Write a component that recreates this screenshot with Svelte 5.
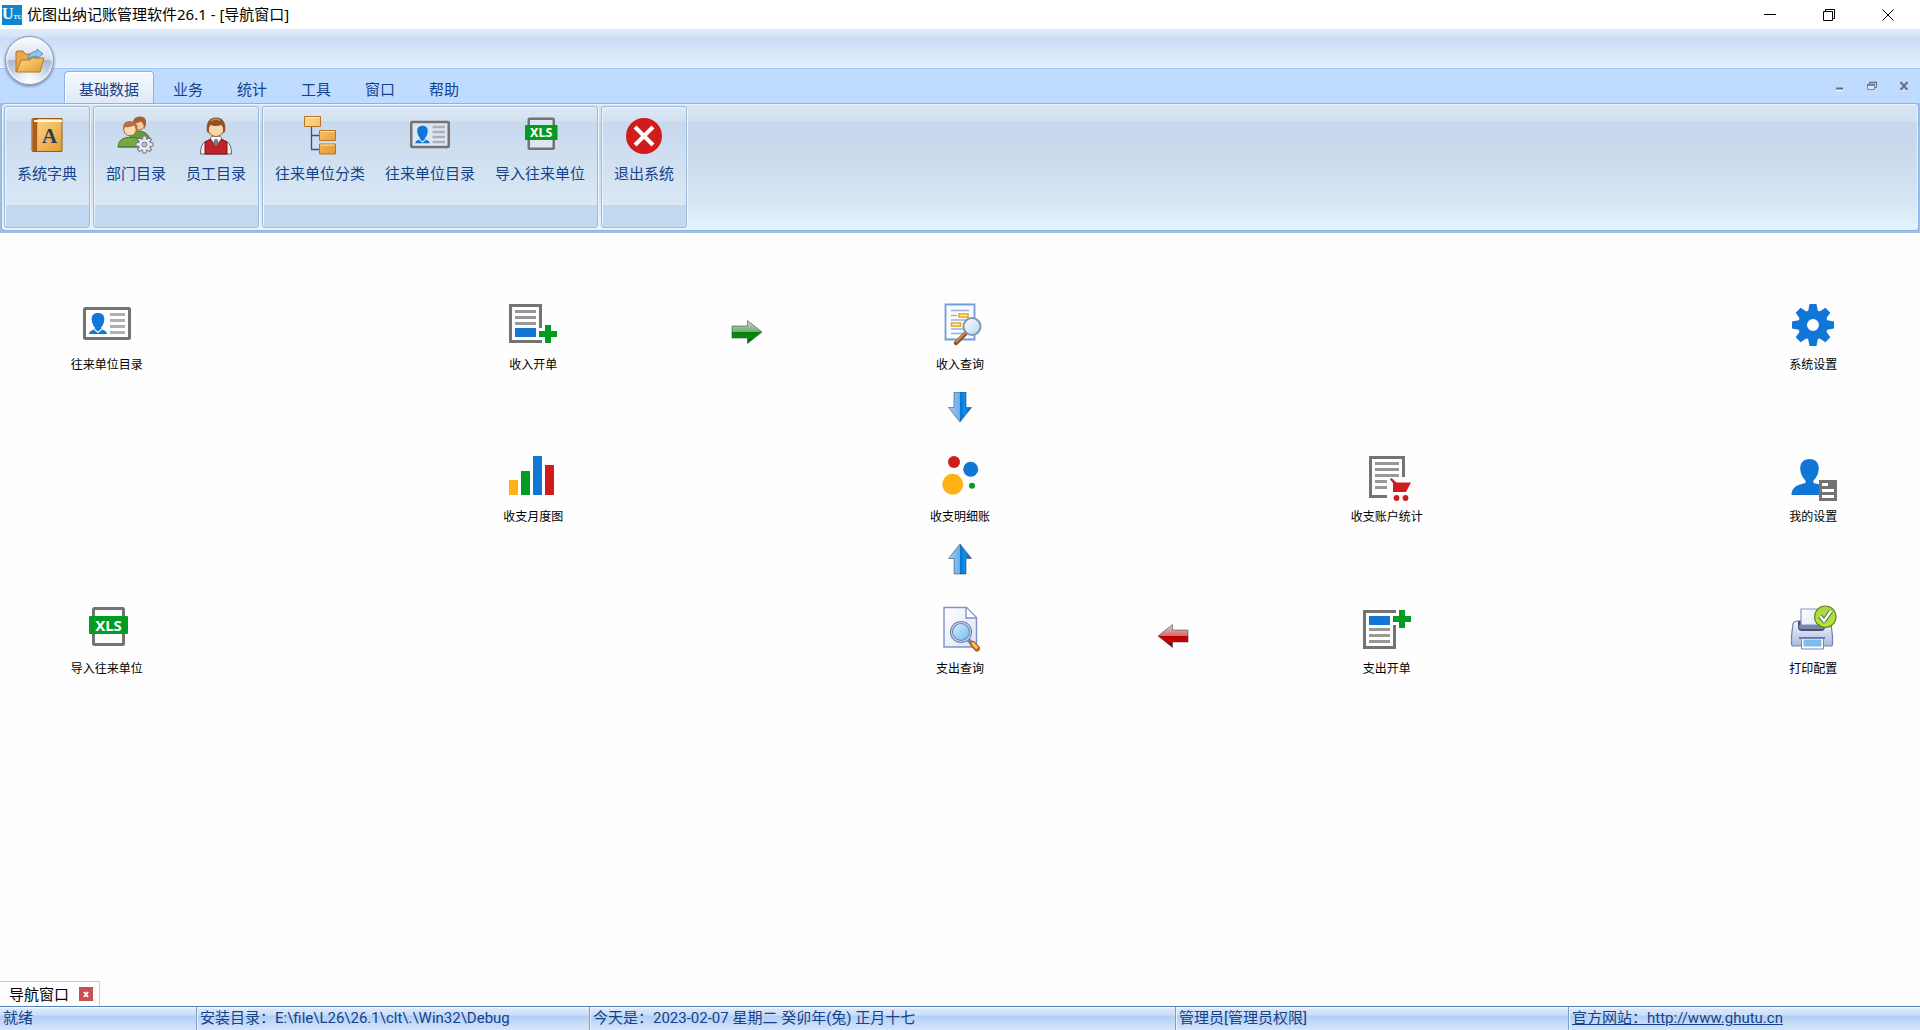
<script>
  const tabs = ['基础数据', '业务', '统计', '工具', '窗口', '帮助'];
  let active = $state('基础数据');

  const groups = [
    [{ icon: 'book', label: '系统字典' }],
    [
      { icon: 'dept', label: '部门目录' },
      { icon: 'staff', label: '员工目录' }
    ],
    [
      { icon: 'tree', label: '往来单位分类' },
      { icon: 'card', label: '往来单位目录' },
      { icon: 'xls', label: '导入往来单位' }
    ],
    [{ icon: 'exit', label: '退出系统' }]
  ];

  // Navigation map: one array per row, nine columns, null is an empty cell.
  const go = (arrow) => ({ arrow });
  const to = (icon, label) => ({ icon, label });
  const map = [
    [to('card', '往来单位目录'), null, to('billIn', '收入开单'), go('right'), to('queryIn', '收入查询'), null, null, null, to('gear', '系统设置')],
    [null, null, null, null, go('down'), null, null, null, null],
    [null, null, to('bars', '收支月度图'), null, to('dots', '收支明细账'), null, to('cart', '收支账户统计'), null, to('user', '我的设置')],
    [null, null, null, null, go('up'), null, null, null, null],
    [to('xls', '导入往来单位'), null, null, null, to('queryOut', '支出查询'), go('left'), to('billOut', '支出开单'), null, to('printer', '打印配置')]
  ];

  const arrows = {
    right: { flip: 'matrix(1 0 0 1 0 0)', paint: 'green' },
    left: { flip: 'matrix(-1 0 0 1 32 0)', paint: 'red' },
    down: { flip: 'matrix(0 1 1 0 0 -1)', paint: 'blue' },
    up: { flip: 'matrix(0 -1 1 0 0 31)', paint: 'blue' }
  };
  const teeth = [0, 45, 90, 135, 180, 225, 270, 315];
</script>

{#snippet art(name)}
  {#if name === 'card'}
    <svg viewBox="0 0 48 48" aria-hidden="true">
      <rect x="1.5" y="8.5" width="45" height="30" rx="1" fill="#fff" fill-opacity=".35" stroke="#737373" stroke-width="3" />
      <path d="M15 13c4.500 0 6.500 2.500 6.300 6.500-.2 4-1.800 6.500-3.600 8.500l2.300 2q3.500 .8 4 4H6q.5-3.200 4-4l2.300-2c-1.800-2-3.400-4.500-3.600-8.500-.2-4 1.800-6.500 6.300-6.500z" fill="#1177d7" />
      <path d="M11 29l4 3.500 4-3.500" fill="none" stroke="#f2f6fb" stroke-width="1.300" />
      <path d="M27 14.500h15M27 20.500h15M27 26.500h15M27 32.500h15" stroke="#aeb0b3" stroke-width="3" />
    </svg>
  {:else if name === 'xls'}
    <svg viewBox="0 0 48 48" aria-hidden="true">
      <rect x="10.500" y="4.500" width="30" height="36" rx="1" fill="#fff" fill-opacity=".3" stroke="#737373" stroke-width="3" />
      <rect x="6" y="12" width="39" height="18" rx="1" fill="#039c23" />
      <text x="25.500" y="26.500" class="xls">XLS</text>
    </svg>
  {:else if name === 'billIn'}
    <svg viewBox="0 0 48 48" aria-hidden="true">
      <path d="M31.500 28V5.500h-30v36H33" fill="none" stroke="#737373" stroke-width="3" />
      <path d="M6 11.500h21M6 17.500h21M6 23.500h21" stroke="#989898" stroke-width="3" />
      <path d="M6 28h21v9H6z" fill="#1177d7" />
      <path d="M36 25h6v6h6v6h-6v6h-6v-6h-6v-6h6z" fill="#039c23" />
    </svg>
  {:else if name === 'billOut'}
    <svg viewBox="0 0 48 48" aria-hidden="true">
      <path d="M33 7.500H1.500v36h30V21" fill="none" stroke="#737373" stroke-width="3" />
      <path d="M6 25.500h21M6 31.500h21M6 37.500h21" stroke="#989898" stroke-width="3" />
      <path d="M6 12h21v9H6z" fill="#1177d7" />
      <path d="M36 6h6v6h6v6h-6v6h-6v-6h-6v-6h6z" fill="#039c23" />
    </svg>
  {:else if name === 'bars'}
    <svg viewBox="0 0 48 48" aria-hidden="true">
      <path d="M0 28h9v15H0z" fill="#ffb115" />
      <path d="M12 19h9v24h-9z" fill="#039c23" />
      <path d="M24 4h9v39h-9z" fill="#1177d7" />
      <path d="M36 13h9v30h-9z" fill="#d11c1c" />
    </svg>
  {:else if name === 'dots'}
    <svg viewBox="0 0 48 48" aria-hidden="true">
      <circle cx="18" cy="10" r="6" fill="#d11c1c" />
      <circle cx="34.700" cy="17.300" r="7.500" fill="#1177d7" />
      <circle cx="16.700" cy="32.300" r="10.500" fill="#ffb115" />
      <circle cx="36" cy="33.700" r="3" fill="#039c23" />
    </svg>
  {:else if name === 'cart'}
    <svg viewBox="0 0 48 48" aria-hidden="true">
      <path d="M40.500 25V5.500h-33v39H24" fill="none" stroke="#737373" stroke-width="3" />
      <path d="M12 11.500h24M12 17.500h24M12 23.500h24M12 29.500h12M12 35.500h12" stroke="#989898" stroke-width="3" />
      <path d="M27 27.500l1.500-1.500 5 4.500H48L43 40H30v-9z" fill="#d11c1c" />
      <circle cx="33.500" cy="46" r="2.900" fill="#d11c1c" />
      <circle cx="42.500" cy="46" r="2.900" fill="#d11c1c" />
    </svg>
  {:else if name === 'gear'}
    <svg viewBox="0 0 48 48" aria-hidden="true">
      <g transform="translate(24 25)" fill="#1177d7">
        {#each teeth as a}
          <path d="M-5-13l1.500-8h7l1.500 8z" transform="rotate({a})" />
        {/each}
      </g>
      <circle cx="24" cy="25" r="10.500" fill="none" stroke="#1177d7" stroke-width="9" />
    </svg>
  {:else if name === 'user'}
    <svg viewBox="0 0 48 48" aria-hidden="true">
      <path d="M20.500 7c6 0 9.500 4 9.300 9.500-.2 5-2 9-5.300 12v2.500c5 1.500 13.500 2 14 12H2.500c0-9.500 8.500-10.500 14-12v-2.500c-3.300-3-5.100-7-5.300-12C11 11 14.500 7 20.500 7z" fill="#1177d7" />
      <path d="M30 28h18v21H30z" fill="#737373" />
      <path d="M33 32.500h6M33 38.500h12M33 44.500h12" stroke="#fff" stroke-width="3" />
    </svg>
  {:else if name === 'queryIn'}
    <svg viewBox="0 0 48 48" aria-hidden="true">
      <path d="M9.500 4.500h29v35h-29z" fill="#fafcff" stroke="#6f9edb" stroke-width="1.800" />
      <path d="M15 10.500h18M15 15.500h6M15 20h18M27 24.500h6M15 29h14M15 33.500h12" stroke="#8fb4e0" stroke-width="1.400" />
      <path d="M23 14h9v3h-9zM15.500 23h9v3h-9z" fill="#fff4c4" stroke="#e9a21c" stroke-width="1.600" />
      <path d="M29.500 33.500L20 43" stroke="#93532a" stroke-width="4.500" stroke-linecap="round" />
      <path d="M29 33L20 42" stroke="#d99b63" stroke-width="1.500" />
      <circle cx="36" cy="26.500" r="8.500" fill="url(#lens)" stroke="#8698ad" stroke-width="2" />
    </svg>
  {:else if name === 'queryOut'}
    <svg viewBox="0 0 48 48" aria-hidden="true">
      <path d="M8 3.500h22.500l10 10v29.500H8z" fill="url(#paper)" stroke="#7f93c8" stroke-width="1.400" />
      <path d="M30 4v10h10" fill="#fff" stroke="#7f93c8" stroke-width="1.400" />
      <path d="M32.500 36l4 4" stroke="#7180ad" stroke-width="4" />
      <path d="M37 40l4 4.500" stroke="#b5651d" stroke-width="6" stroke-linecap="round" />
      <path d="M37 39.500l3.500 4" stroke="#ffc164" stroke-width="2.800" stroke-linecap="round" />
      <circle cx="25" cy="28" r="9.500" fill="url(#lens2)" stroke="#6d80b1" stroke-width="3.200" />
      <circle cx="25" cy="28" r="9.500" fill="none" stroke="#c6d3ec" stroke-width="1.200" />
    </svg>
  {:else if name === 'printer'}
    <svg viewBox="0 0 48 48" aria-hidden="true">
      <path d="M4 20q1-3 5-3h28q4 0 5 3l1.500 12v8q0 2-2 2h-37q-2 0-2-2v-8z" fill="url(#shell)" stroke="#7482b2" stroke-width="1.200" />
      <path d="M9 17h27v6q0 4-4 4H13q-4 0-4-4z" fill="#4a5272" />
      <path d="M12 5h20v16H12z" fill="url(#paper)" stroke="#7f93c8" stroke-width="1.200" />
      <path d="M10 21h25v2q0 2-3 2H13q-3 0-3-2z" fill="#7b86a9" />
      <path d="M10 33h26v2H10z" fill="#6776aa" />
      <path d="M12.500 34.500h22V45h-22z" fill="#fff" stroke="#7482b2" />
      <path d="M14.500 35.500h18v7h-18z" fill="#7dbcec" />
      <circle cx="36.300" cy="12.700" r="10.700" fill="url(#lime)" stroke="#5d8a19" stroke-width="1.200" />
      <path d="M31 12l4 5 7-10" fill="none" stroke="#5c6f4c" stroke-width="4.600" stroke-linejoin="round" />
      <path d="M31 12l4 5 7-10" fill="none" stroke="#fff" stroke-width="2.400" />
    </svg>
  {:else if name === 'book'}
    <svg viewBox="0 0 40 40" aria-hidden="true">
      <path d="M6 3.500h29v33H6q-1 0-1-1v-31q0-1 1-1z" fill="url(#gold)" stroke="#9c5a17" />
      <path d="M5.500 4h5v32.500h-5z" fill="#a95d24" />
      <path d="M7 6h28" stroke="#fff4dc" stroke-width="2" />
      <path d="M10.500 8v28" stroke="#e9ae62" />
      <text x="22.500" y="28" class="letter">A</text>
    </svg>
  {:else if name === 'dept'}
    <svg viewBox="0 0 40 40" aria-hidden="true">
      <path d="M13 24q2-7 9-8 10 0 12 9v3H14z" fill="#6a9a3a" stroke="#4c7727" />
      <circle cx="23" cy="9" r="6" fill="#f3cf9f" stroke="#a4683c" />
      <path d="M17 8q0-7 8-6.500 6 .5 5 8l-2 5q0-6-3-8-3 2-8 1.500z" fill="#a65f33" />
      <path d="M2 32q0-8 9-9.500h7q7 1.500 8 9.500z" fill="#78a843" stroke="#4c7727" />
      <path d="M2.500 31h23v1.500h-23z" fill="#57852b" />
      <circle cx="14" cy="14.500" r="6.300" fill="#f9dcae" stroke="#a4683c" />
      <path d="M7 15q-1-9 7-9 8 0 7.500 8l-1.500 3q0-5-2-6.500-4 2.500-9 1.500z" fill="#b97043" />
      <g transform="translate(28.500 29.500)" fill="#eceff4" stroke="#6f7480" stroke-width="1">
        {#each teeth as a}
          <path d="M-2-5l.5-3.500h3l.5 3.500z" transform="rotate({a})" />
        {/each}
        <circle r="5.500" stroke="none" />
        <circle r="2.500" fill="#b8c2d2" />
      </g>
    </svg>
  {:else if name === 'staff'}
    <svg viewBox="0 0 40 40" aria-hidden="true">
      <path d="M4.500 39q0-9 4-12l7-3h9l7 3q4 3 4 12z" fill="#f4f4f6" stroke="#6a5e62" />
      <path d="M9 39V27l6-3 5 7 5-7 6 3v12z" fill="#c02228" stroke="#7c1417" />
      <path d="M14 23l6 8 6-8-3-2h-6z" fill="#fff" stroke="#55585e" stroke-width=".8" />
      <path d="M18.500 24h3l1 4-2.500 3-2.500-3z" fill="#777d88" />
      <circle cx="20" cy="13.500" r="8" fill="#f8d8aa" stroke="#8f5a30" />
      <path d="M11 17q-2-14 9-14.500Q31 3 29 17l-2 1q1-5-1.500-8-6 2-11 0-2.500 3-1.500 8z" fill="#8e5227" />
      <path d="M15 6q4-3 9-.5" stroke="#c88b54" fill="none" stroke-width="1.500" />
    </svg>
  {:else if name === 'tree'}
    <svg viewBox="0 0 40 40" aria-hidden="true">
      <path d="M11.500 11v23.500H20M11.500 20.500H20" fill="none" stroke="#3d4f75" stroke-width="1.300" />
      <path d="M4.500 1.500h16v10h-16zM19.500 15.500h16v10h-16zM19.500 29h16v10h-16z" fill="url(#gold)" stroke="#b77327" />
      <path d="M5.500 2.500h14M20.500 16.500h14M20.500 30h14" stroke="#ffe9b9" />
    </svg>
  {:else if name === 'exit'}
    <svg viewBox="0 0 40 40" aria-hidden="true">
      <circle cx="20" cy="21" r="18" fill="#d11c1c" />
      <path d="M11 12l18 18M29 12L11 30" stroke="#fff" stroke-width="4" />
    </svg>
  {/if}
{/snippet}

<svg class="defs" width="0" height="0" aria-hidden="true">
  <defs>
    <linearGradient id="gold" x2="1" y2="1"><stop offset="0" stop-color="#ffd98c" /><stop offset="1" stop-color="#e29b33" /></linearGradient>
    <linearGradient id="paper" x2="1" y2="1"><stop offset="0" stop-color="#fff" /><stop offset="1" stop-color="#dbe3f6" /></linearGradient>
    <linearGradient id="shell" x2="0" y2="1"><stop offset="0" stop-color="#f6f8ff" /><stop offset="1" stop-color="#aab8dc" /></linearGradient>
    <linearGradient id="lime" x2="0" y2="1"><stop offset="0" stop-color="#a8d34a" /><stop offset="1" stop-color="#b9ea2e" /></linearGradient>
    <linearGradient id="lens" x2="1" y2="1"><stop offset="0" stop-color="#fff" /><stop offset="1" stop-color="#b4d4f6" /></linearGradient>
    <linearGradient id="lens2" x2="1" y2="1"><stop offset="0" stop-color="#d8f3ff" /><stop offset="1" stop-color="#6bb8ec" /></linearGradient>
    <linearGradient id="green" x2="0" y2="1"><stop offset="0" stop-color="#c9dfc9" /><stop offset=".5" stop-color="#6fae6f" /><stop offset=".5" stop-color="#0a7c0a" /><stop offset=".7" stop-color="#079007" /><stop offset="1" stop-color="#045204" /></linearGradient>
    <linearGradient id="red" x2="0" y2="1"><stop offset="0" stop-color="#ecc9c9" /><stop offset=".5" stop-color="#cf6a6a" /><stop offset=".5" stop-color="#b80000" /><stop offset=".7" stop-color="#c90000" /><stop offset="1" stop-color="#6e0000" /></linearGradient>
    <linearGradient id="blue" x2="0" y2="1"><stop offset="0" stop-color="#a9d0f5" /><stop offset=".5" stop-color="#66aeea" /><stop offset=".5" stop-color="#0672cf" /><stop offset=".7" stop-color="#1090ec" /><stop offset="1" stop-color="#0563bd" /></linearGradient>
  </defs>
</svg>

<div class="app">
  <header class="title">
    <span class="logo">U<small>TU</small></span>
    <h1>优图出纳记账管理软件26.1 - [导航窗口]</h1>
    <div class="win">
      <button aria-label="最小化"><svg viewBox="0 0 12 12"><path d="M0 5.500h12" /></svg></button>
      <button aria-label="还原"><svg viewBox="0 0 12 12"><path d="M.5 2.500h9v9h-9zM2.500 2.500v-2h9v9h-2" /></svg></button>
      <button aria-label="关闭"><svg viewBox="0 0 12 12"><path d="M.5.5l11 11M11.500.5l-11 11" /></svg></button>
    </div>
  </header>

  <div class="caption">
    <button class="orb" aria-label="打开">
      <svg viewBox="0 0 30 26" aria-hidden="true">
        <path d="M1 24V4l1-1h6l2 3h13v5" fill="#e8a850" stroke="#b97420" />
        <path d="M1.500 24L6 12h9l2-2h12l-4 14z" fill="url(#gold)" stroke="#b97420" />
        <path d="M13 11q1-8 9-7.500V1l6 5-6 4.500V8q-5 0-9 3z" fill="#8cc6ee" stroke="#4187bb" stroke-width=".8" />
      </svg>
    </button>
  </div>

  <nav class="tabs">
    {#each tabs as tab}
      <button class="tab" class:on={tab === active} onclick={() => (active = tab)}>{tab}</button>
    {/each}
    <div class="mdi">
      <button aria-label="最小化子窗口"><svg viewBox="0 0 10 10"><path d="M1 7.500h7" stroke="#667084" stroke-width="2" /><path d="M1 9.500h7" stroke="#fff" /></svg></button>
      <button aria-label="还原子窗口"><svg viewBox="0 0 10 10"><path d="M2.500 3V1.500h7v5H8" stroke="#667084" fill="none" /><path d="M.5 3.500h7v5h-7z" stroke="#7b88a3" fill="#dbe8fa" /><path d="M0 4h8M2 1.500h8" stroke="#667084" stroke-width="1.500" /></svg></button>
      <button aria-label="关闭子窗口"><svg viewBox="0 0 10 10"><path d="M1 9.500h3M6 9.500h3" stroke="#fff" /><path d="M1.500 1l7 8M8.500 1l-7 8" stroke="#667084" stroke-width="2" /></svg></button>
    </div>
  </nav>

  <div class="ribbon">
    <div class="panel">
      {#each groups as group}
        <section class="group">
          {#each group as item}
            <button class="tool">{@render art(item.icon)}<span>{item.label}</span></button>
          {/each}
        </section>
      {/each}
    </div>
  </div>

  <main>
    {#each map.flat() as cell}
      {#if cell?.arrow}
        <div class="arrow">
          <svg viewBox="0 0 32 32" aria-hidden="true">
            <g transform={arrows[cell.arrow].flip}>
              <path d="M1 10h15.500V4.500L31 16 16.500 27.500V22H1z" fill="url(#{arrows[cell.arrow].paint})" stroke="#31404e" stroke-opacity=".55" />
            </g>
          </svg>
        </div>
      {:else if cell}
        <button class="node">{@render art(cell.icon)}<span>{cell.label}</span></button>
      {:else}
        <i></i>
      {/if}
    {/each}
  </main>

  <div class="docs">
    <div class="doc">
      <span>导航窗口</span>
      <button aria-label="关闭导航窗口"><svg viewBox="0 0 14 14"><path d="M5 5l4 5M9 5l-4 5" /></svg></button>
    </div>
  </div>

  <footer>
    <span>就绪</span>
    <span>安装目录：E:\file\L26\26.1\clt\.\Win32\Debug</span>
    <span>今天是：2023-02-07 星期二 癸卯年(兔) 正月十七</span>
    <span>管理员[管理员权限]</span>
    <span><a href="http://www.ghutu.cn">官方网站：http://www.ghutu.cn</a></span>
  </footer>
</div>

<style>
  :global(body) { margin: 0; background: #fefefe; }
  .app {
    min-height: 100vh;
    display: flex;
    flex-direction: column;
    font: 15px/20px "Noto Sans", "Noto Sans CJK SC", sans-serif;
    color: #15428b;
  }
  .defs { position: absolute; }
  svg { display: block; }
  button { font: inherit; color: inherit; border: 0; padding: 0; margin: 0; background: none; }

  .title { height: 29px; display: flex; align-items: center; gap: 5px; padding: 0 3px 0 2px; background: #fff; color: #000; }
  .title h1 { font: inherit; margin: 0; padding-bottom: 2px; flex: 1; }
  .logo { width: 20px; height: 20px; background: #0c86cf; color: #fff; font: bold 16px/17px "Liberation Serif", serif; white-space: nowrap; overflow: hidden; }
  .logo small { font-size: 6px; }
  .win { display: flex; }
  .win button { width: 59px; height: 28px; display: grid; place-items: center; }
  .win svg { width: 12px; height: 12px; fill: none; stroke: #000; }

  .caption {
    height: 39px;
    position: relative;
    border-bottom: 1px solid #9cc6f8;
    box-shadow: inset 0 -1px #e9f2fd;
    background: linear-gradient(#dfebfb 0, #d5e4f7 8px, #cadcf6 8px, #e4effd 100%);
  }
  .orb {
    position: absolute;
    left: 5px;
    top: 7px;
    z-index: 1;
    width: 49px;
    height: 49px;
    border-radius: 50%;
    display: grid;
    place-items: center;
    border: 1px solid #8798b3;
    background: radial-gradient(ellipse at 50% 100%, #fff 0, #ffffff00 55%), linear-gradient(#fbfcfe 0, #d5dfec 48%, #a9bbd3 50%, #dfe8f3 100%);
    box-shadow: 0 1px 3px #5f7699, inset 0 0 2px 1px #fff;
  }
  .orb svg { width: 30px; height: 26px; }

  .tabs { height: 34px; display: flex; align-items: flex-end; gap: 4px; padding-left: 64px; background: #bfdbff; }
  .tab { height: 32px; padding: 4px 15px 0; }
  .tab.on {
    border-radius: 4px 4px 0 0;
    background: linear-gradient(#f5f9fe, #e0eaf7);
    box-shadow: inset 1px 1px #8db2e3, inset -1px 0 #8db2e3, inset 2px 2px #fff;
  }
  .mdi { margin: 0 6px 7px auto; display: flex; gap: 12px; }
  .mdi button { width: 20px; height: 20px; display: grid; place-items: center; }
  .mdi svg { width: 10px; height: 10px; }

  .ribbon { background: #a3bfe4; padding: 0 1px 2px; }
  .panel {
    display: flex;
    gap: 3px;
    padding: 2px;
    border: 1px solid #8db2e3;
    border-radius: 4px;
    background: linear-gradient(#dbe6f4 0, #d1dfef 17px, #c7d8ed 18px, #c8d9ec 45px, #d5e5f3 95px, #e3f4ff 100%);
    box-shadow: inset 0 0 0 1px #e8f3fd;
  }
  .group {
    display: flex;
    padding: 8px 2px 44px;
    border: 1px solid #9dbbd9;
    border-radius: 3px;
    background: linear-gradient(#dfe9f5 0, #d2e0f0 14px, #c8d9ee 15px, #dae8f5 98px, #c1d8f0 98px);
    box-shadow: inset 1px 1px #edf4fb, 1px 1px #edf6fd;
  }
  .tool { padding: 0 10px; display: flex; flex-direction: column; align-items: center; gap: 8px; }
  .tool svg { width: 40px; height: 40px; }

  main {
    flex: 1;
    display: grid;
    grid-template-columns: repeat(9, 1fr);
    grid-auto-rows: 76px;
    align-content: start;
    padding-top: 67px;
    background: #fefefe;
  }
  .node { height: 74px; justify-self: center; display: flex; flex-direction: column; align-items: center; gap: 8px; color: #000; font-size: 12px; line-height: 18px; }
  .node svg { width: 48px; height: 48px; overflow: visible; }
  .arrow { height: 64px; display: grid; place-items: center; }
  .arrow svg { width: 32px; height: 32px; }
  .xls { font: bold 15px "Noto Sans", sans-serif; fill: #fff; text-anchor: middle; }
  .letter { font: bold 21px "Liberation Serif", serif; fill: #2d3b55; text-anchor: middle; }

  .docs { display: flex; background: #fefefe; }
  .doc { display: flex; align-items: center; gap: 10px; padding: 2px 6px 2px 9px; border: 1px solid #ccc; border-width: 1px 1px 0 0; color: #000; }
  .doc button { width: 14px; height: 14px; background: #c75050; }
  .doc svg { stroke: #fff; stroke-width: 2; }

  footer {
    display: grid;
    grid-template-columns: 196fr 393fr 586fr 393fr 352fr;
    border-top: 1px solid #5480b5;
    font-family: Roboto, "Noto Sans CJK SC", sans-serif;
    background: linear-gradient(#fff 0, #dbe8fa 2px, #cbdff8 8px, #b2cff4 9px, #d5e5fb 100%);
  }
  footer span { padding: 1px 0 2px 3px; border-left: 1px solid #7c9fcc; box-shadow: inset 1px 0 #eaf2fd; white-space: nowrap; }
  footer span:first-child { border-left: 0; box-shadow: none; }
  footer a { color: inherit; }
</style>
